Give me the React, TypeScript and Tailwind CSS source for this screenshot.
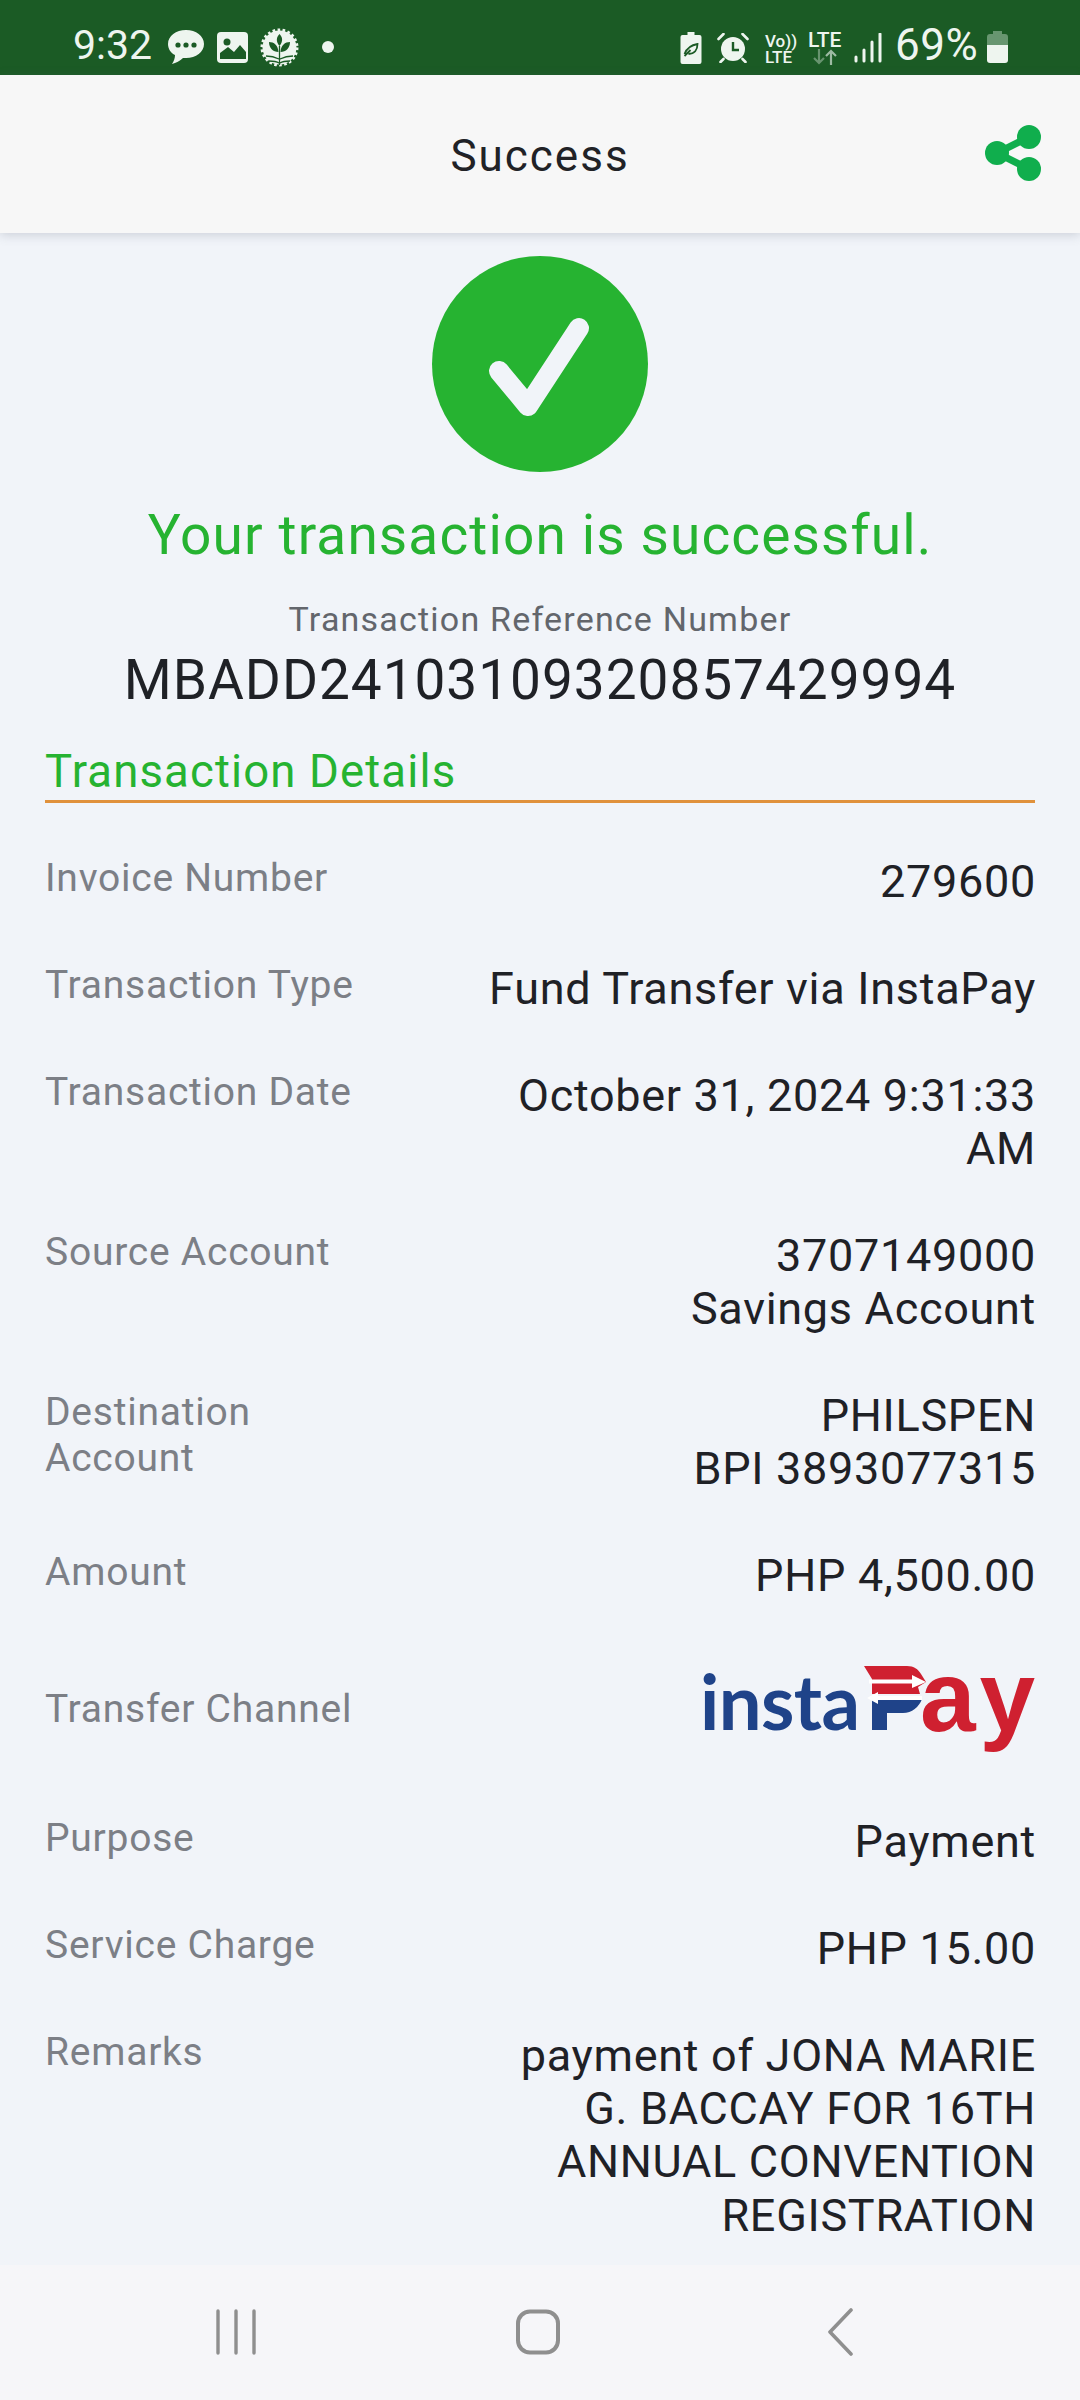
const rows: { label: string; value: string[] }[] = [
  { label: "Invoice Number", value: ["279600"] },
  { label: "Transaction Type", value: ["Fund Transfer via InstaPay"] },
  { label: "Transaction Date", value: ["October 31, 2024 9:31:33 AM"] },
  { label: "Source Account", value: ["3707149000", "Savings Account"] },
  { label: "Destination Account", value: ["PHILSPEN", "BPI 3893077315"] },
  { label: "Amount", value: ["PHP 4,500.00"] },
];
const rows2: { label: string; value: string[] }[] = [
  { label: "Purpose", value: ["Payment"] },
  { label: "Service Charge", value: ["PHP 15.00"] },
  { label: "Remarks", value: ["payment of JONA MARIE G. BACCAY FOR 16TH ANNUAL CONVENTION REGISTRATION"] },
];

function Row({ label, value }: { label: string; value: string[] }) {
  return (
    <div className="flex justify-between items-start">
      <div className="w-[330px] text-[39px] leading-[46px] tracking-[0.75px] text-[#7c7f86]">{label}</div>
      <div className="w-[550px] -mr-[1px] text-right text-[45px] leading-[53.3px] tracking-[0.7px] text-[#1f2126]">
        {value.map((v) => (
          <div key={v}>{v}</div>
        ))}
      </div>
    </div>
  );
}

function StatusBar() {
  const c = "#eef5ef";
  return (
    <div className="relative h-[75px] bg-[#1b5b25] shrink-0">
      <span className="absolute left-[73px] top-[22px] text-[41px] leading-[47px] text-[#eef5ef]">9:32</span>
      <svg className="absolute left-[168px] top-[29px]" width="36" height="37" viewBox="0 0 36 37">
        <path d="M18 1C8 1 0 7 0 15c0 5 3 9 7 11 0 3-1 6-3 9 4-1 8-3 11-6h3c10 0 18-6 18-14S28 1 18 1z" fill={c} />
        <circle cx="10" cy="16" r="2.6" fill="#1b5b25" /><circle cx="18" cy="16" r="2.6" fill="#1b5b25" /><circle cx="26" cy="16" r="2.6" fill="#1b5b25" />
      </svg>
      <svg className="absolute left-[217px] top-[32px]" width="31" height="31" viewBox="0 0 31 31">
        <rect width="31" height="31" rx="4" fill={c} />
        <circle cx="10" cy="10" r="3.5" fill="#1b5b25" />
        <path d="M3 27v-6l8-6 6 5 6-7 6 7v7z" fill="#1b5b25" />
      </svg>
      <svg className="absolute left-[260px] top-[28px]" width="39" height="39" viewBox="0 0 39 39">
        <circle cx="19.5" cy="19.5" r="17" fill={c} />
        <circle cx="19.5" cy="19.5" r="17.5" fill="none" stroke={c} strokeWidth="3" strokeDasharray="2.6 2.4" />
        <path d="M19.5 6c3 3 4 7 0 12-4-5-3-9 0-12zM9 14c5 0 9 3 9.5 10C13 24 9 20 9 14zM30 14c-5 0-9 3-9.500 10C26 24 30 20 30 14z" fill="#1b5b25" />
        <path d="M19.5 18v19M6 28c5 0 9 1 13 3M33 28c-5 0-9 1-13 3M9 33c4 0 7 0 10 2M30 33c-4 0-7 0-10 2" stroke="#1b5b25" strokeWidth="1.3" fill="none" />
      </svg>
      <div className="absolute left-[322px] top-[41px] w-[12px] h-[12px] rounded-full bg-[#eef5ef]" />

      <svg className="absolute left-[680px] top-[32px]" width="22" height="32" viewBox="0 0 21 32">
        <path d="M7 0h7v3h5a2 2 0 0 1 2 2v25a2 2 0 0 1-2 2H2a2 2 0 0 1-2-2V5a2 2 0 0 1 2-2h5z" fill={c} />
        <path d="M4 22c2-5 7-9 13-10 0 6-3 10-9 10M4 24l6-6" stroke="#1b5b25" strokeWidth="1.8" fill="none" />
      </svg>
      <svg className="absolute left-[717px] top-[33px]" width="32" height="30" viewBox="0 0 31 30">
        <circle cx="15.500" cy="16" r="12" fill={c} />
        <path d="M15.5 9v8h6" stroke="#1b5b25" strokeWidth="2.4" fill="none" />
        <path d="M1 6l5-5M30 6l-5-5M6 26l-3 3M25 26l3 3" stroke={c} strokeWidth="2.6" strokeLinecap="round" />
      </svg>
      <div className="absolute left-[765px] top-[33px] w-[32px] text-[17px] leading-[16px] font-medium text-[#eef5ef] whitespace-nowrap">
        <div>Vo))</div>
        <div>LTE</div>
      </div>
      <span className="absolute left-[808px] top-[28px] text-[21px] leading-[24px] font-medium text-[#eef5ef]">LTE</span>
      <svg className="absolute left-[812px] top-[49px]" width="26" height="16" viewBox="0 0 26 16">
        <path d="M7 0v14M2 9l5 5 5-5" stroke="#68946f" strokeWidth="2.2" fill="none" />
        <path d="M19 16V2M14 7l5-5 5 5" stroke="#9ebba3" strokeWidth="2.2" fill="none" />
      </svg>
      <svg className="absolute left-[854px] top-[33px]" width="28" height="30" viewBox="0 0 28 30">
        <path d="M2 24v4M10 17v11M18 9v19M26 1v27" stroke={c} strokeWidth="3" strokeLinecap="round" />
      </svg>
      <span className="absolute left-[895px] top-[22px] text-[44px] leading-[47px] tracking-[0.5px] text-[#eef5ef]">69%</span>
      <svg className="absolute left-[987px] top-[31px]" width="21" height="32" viewBox="0 0 21 32">
        <path d="M6 0h9v3h3a3 3 0 0 1 3 3v8H0V6a3 3 0 0 1 3-3h3z" fill="#689670" />
        <path d="M0 14h21v15a3 3 0 0 1-3 3H3a3 3 0 0 1-3-3z" fill={c} />
      </svg>
    </div>
  );
}

function InstaPay() {
  return (
    <div className="relative w-[332px] h-[106px]">
      <span className="absolute left-[-3px] top-[-8px] font-['Lato'] font-bold text-[76px] leading-[106px] tracking-[-0.6px] text-[#1f4389]">
        insta
      </span>
      <span className="absolute left-[217px] top-[-25px] font-['Liberation_Sans'] font-bold text-[100px] leading-[130px] tracking-[4px] text-[#cf2030]">
        ay
      </span>
      <svg className="absolute left-[161px] top-[10px]" width="64" height="65" viewBox="0 0 64 65">
        <path d="M0 0h43c7 0 11 3 14 8l5 8-8 5 2 7H8V13z" fill="#cf2030" />
        <path d="M8 33h50c-3 8-10 14-19 14H23v17H8z" fill="#1f4389" />
        <path d="M5 13.5h43V9l14 7-14 6v-4.500H5z" fill="#fff" />
        <path d="M58 34H14v4L3 32l11-6v4h44z" fill="#fff" />
      </svg>
    </div>
  );
}

export default function App() {
  return (
    <div className="w-[1080px] h-[2400px] overflow-hidden flex flex-col bg-[#f1f4f9] font-['Roboto',sans-serif]">
      <StatusBar />
      <header className="relative h-[158px] shrink-0 bg-[#f7f7f7] shadow-[0_2px_10px_rgba(90,100,120,0.25)] flex items-center justify-center">
        <h1 className="text-[44px] leading-[50px] tracking-[2px] text-[#212226] mt-[3px]">Success</h1>
        <svg className="absolute right-[33px] top-[48px]" width="62" height="60" viewBox="0 0 62 60">
          <path d="M44 14 12 30l32 16" fill="none" stroke="#10ae4d" strokeWidth="7" />
          <circle cx="44" cy="14" r="12" fill="#10ae4d" />
          <circle cx="12" cy="30" r="12" fill="#10ae4d" />
          <circle cx="44" cy="46" r="12" fill="#10ae4d" />
        </svg>
      </header>

      <main className="flex-1 min-h-0 flex flex-col px-[45px]">
        <div className="flex flex-col items-center pt-[23px]">
          <svg width="216" height="216" viewBox="0 0 216 216">
            <circle cx="108" cy="108" r="108" fill="#26b331" />
            <path d="M67 115l29 35 51-78" fill="none" stroke="#f1f4f9" strokeWidth="20" strokeLinecap="round" strokeLinejoin="round" />
          </svg>
          <p className="mt-[30px] text-[55px] leading-[66px] tracking-[1.12px] text-[#26b331] whitespace-nowrap">Your transaction is successful.</p>
          <p className="mt-[31px] text-[34px] leading-[40px] tracking-[1.2px] text-[#63666c]">Transaction Reference Number</p>
          <p className="mt-[9px] text-[55px] leading-[65px] tracking-[0.95px] text-[#1f2126] whitespace-nowrap">MBADD24103109320857429994</p>
        </div>
        <h2 className="mt-[33px] pb-[2px] border-b-[3px] border-[#e0913c] text-[45.5px] leading-[52px] tracking-[1.15px] text-[#26b331]">
          Transaction Details
        </h2>
        <div className="flex flex-col gap-[53.5px] pt-[52px]">
          {rows.map((r) => (
            <Row key={r.label} {...r} />
          ))}
          <div className="flex justify-between items-center">
            <div className="text-[39px] leading-[46px] tracking-[0.75px] text-[#7c7f86]">Transfer Channel</div>
            <InstaPay />
          </div>
          {rows2.map((r) => (
            <Row key={r.label} {...r} />
          ))}
        </div>
      </main>

      <nav className="h-[135px] shrink-0 bg-[#f6f6f9] flex">
        <div className="relative w-full h-full">
          <svg className="absolute left-[214px] top-[44px]" width="44" height="46" viewBox="0 0 44 46">
            <path d="M4 2v42M22 2v42M40 2v42" stroke="#8f8f8f" strokeWidth="3.4" strokeLinecap="round" />
          </svg>
          <svg className="absolute left-[515px] top-[44px]" width="46" height="46" viewBox="0 0 46 46">
            <rect x="3" y="2.5" width="40" height="41" rx="12" fill="none" stroke="#8f8f8f" strokeWidth="4" />
          </svg>
          <svg className="absolute left-[826px] top-[43px]" width="28" height="48" viewBox="0 0 28 48">
            <path d="M25 2 4 24l21 22" fill="none" stroke="#8f8f8f" strokeWidth="3.6" strokeLinecap="round" strokeLinejoin="round" />
          </svg>
        </div>
      </nav>
    </div>
  );
}
